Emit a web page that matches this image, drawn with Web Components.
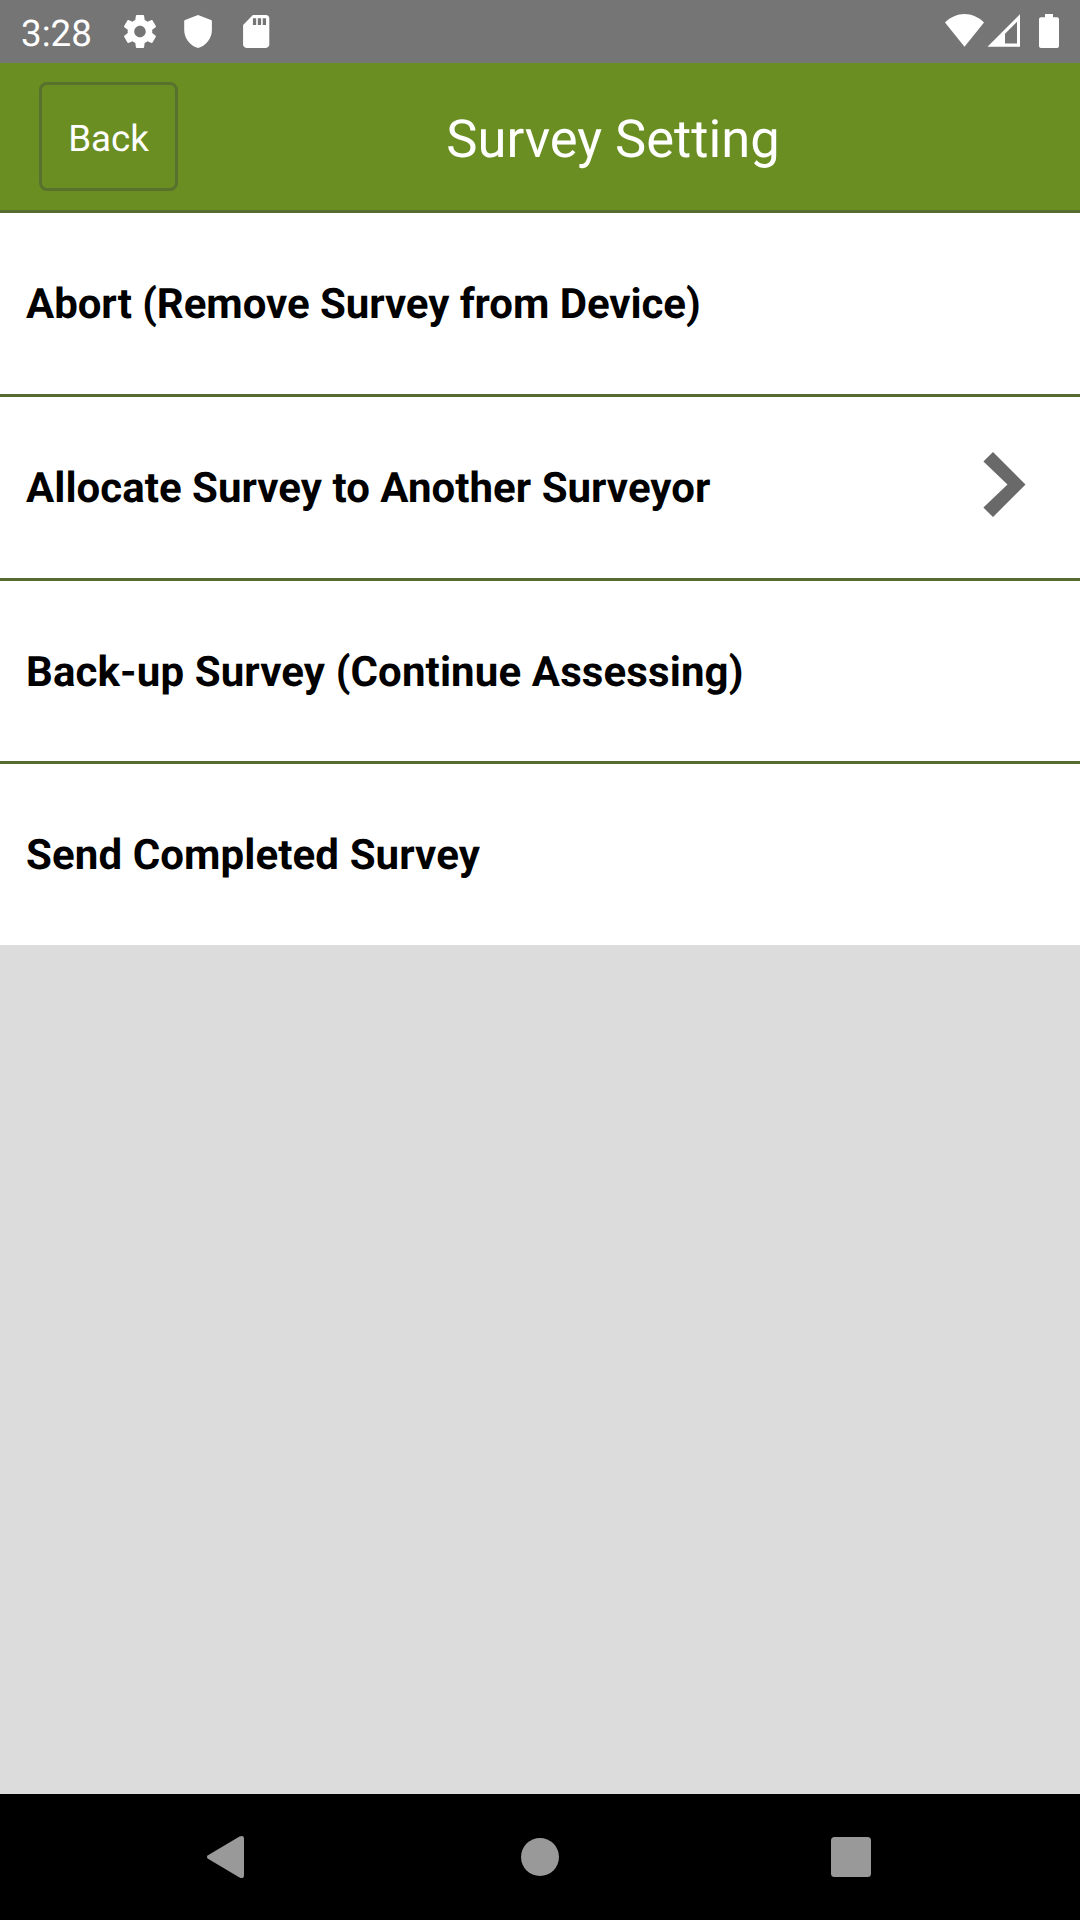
<!DOCTYPE html>
<html lang="en">
<head>
<meta charset="utf-8">
<title>Survey Setting</title>
<style>
    body {
        margin: 0;
        font-family: Roboto, "Liberation Sans", sans-serif;
        text-rendering: geometricPrecision;
    }
</style>
</head>
<body>
<survey-screen>
    <status-bar slot="status" time="3:28"></status-bar>
    <title-bar slot="title" back="Back">Survey Setting</title-bar>
    <setting-row style="--tracking: -0.06px">Abort (Remove Survey from Device)</setting-row>
    <setting-row style="--tracking: 0.03px" chevron>Allocate Survey to Another Surveyor</setting-row>
    <setting-row style="--tracking: 0.12px">Back-up Survey (Continue Assessing)</setting-row>
    <setting-row style="--tracking: 0.1px" last>Send Completed Survey</setting-row>
    <nav-bar slot="nav"></nav-bar>
</survey-screen>

<script>
class SurveyScreen extends HTMLElement {
    constructor() {
        super()
        this.attachShadow({ mode: 'open' })
        this.shadowRoot.innerHTML = /*html*/`
        <style>
            :host {
                display: flex;
                flex-direction: column;
                width: 1080px;
                height: 1920px;
                background-color: #dcdcdc;
                overflow: hidden;
            }
            main {
                flex: 1;
            }
        </style>
        <slot name="status"></slot>
        <slot name="title"></slot>
        <main><slot></slot></main>
        <slot name="nav"></slot>
        `
    }
}

class StatusBar extends HTMLElement {
    constructor() {
        super()
        this.attachShadow({ mode: 'open' })
        this.shadowRoot.innerHTML = /*html*/`
        <style>
            :host {
                display: flex;
                justify-content: space-between;
                height: 63px;
                background-color: #757575;
                color: white;
            }
            div {
                display: flex;
            }
            span {
                width: 94px;
                padding-left: 21px;
                font-size: 36.75px;
                line-height: 68px;
            }
            svg {
                display: block;
                fill: white;
            }
        </style>
        <div>
            <span></span>
            <svg width="165" height="63" viewBox="115 0 165 63">
                <path transform="translate(120.3 11.8) scale(1.64)" d="M19.43 12.98c.04-.32.07-.64.07-.98s-.03-.66-.07-.98l2.11-1.65c.19-.15.24-.42.12-.64l-2-3.46c-.12-.22-.39-.3-.61-.22l-2.49 1c-.52-.4-1.08-.73-1.69-.98l-.38-2.65C14.46 2.18 14.25 2 14 2h-4c-.25 0-.46.18-.49.42l-.38 2.65c-.61.25-1.17.59-1.69.98l-2.49-1c-.23-.09-.49 0-.61.22l-2 3.46c-.13.22-.07.49.12.64l2.11 1.65c-.04.32-.07.65-.07.98s.03.66.07.98l-2.11 1.65c-.19.15-.24.42-.12.64l2 3.46c.12.22.39.3.61.22l2.49-1c.52.4 1.08.73 1.69.98l.38 2.65c.03.24.24.42.49.42h4c.25 0 .46-.18.49-.42l.38-2.65c.61-.25 1.17-.59 1.69-.98l2.49 1c.23.09.49 0 .61-.22l2-3.46c.12-.22.07-.49-.12-.64l-2.11-1.65zM12 15.5c-1.93 0-3.5-1.57-3.5-3.5s1.57-3.5 3.5-3.5 3.5 1.57 3.5 3.5-1.57 3.5-3.5 3.5z"/>
                <path d="M198 15 L211 20 Q211.900 20.400 211.900 21.500 V30 C211.900 38.500 206 45.800 198 48 C190 45.800 184.200 38.500 184.200 30 V21.500 Q184.200 20.400 185 20 Z"/>
                <path transform="translate(236.500 11.8) scale(1.64)" d="M18 2h-8L4.020 8 4 20c0 1.100.9 2 2 2h12c1.100 0 2-.9 2-2V4c0-1.100-.9-2-2-2zm-6 6h-2V4h2v4zm3 0h-2V4h2v4zm3 0h-2V4h2v4z"/>
            </svg>
        </div>
        <svg width="150" height="63" viewBox="930 0 150 63">
            <path d="M964.500 46.700 L945 22.500 C950.500 17 957.300 14 964.500 14 C971.700 14 978.500 17 984 22.500 Z"/>
            <path fill-rule="evenodd" d="M1020 14.300 V46.700 H987.500 Z M1017 21.800 L1005 33.800 V43.600 H1017 Z"/>
            <path d="M1045 14 H1053 V17.300 H1057 Q1059 17.300 1059 19.300 V46 Q1059 48 1057 48 H1041 Q1039 48 1039 46 V19.300 Q1039 17.300 1041 17.300 H1045 Z"/>
        </svg>
        `
    }

    connectedCallback() {
        this.shadowRoot.querySelector('span').textContent = this.getAttribute('time')
    }
}

class TitleBar extends HTMLElement {
    constructor() {
        super()
        this.attachShadow({ mode: 'open' })
        this.shadowRoot.innerHTML = /*html*/`
        <style>
            :host {
                display: flex;
                align-items: center;
                box-sizing: border-box;
                height: 150px;
                padding-left: 39px;
                border-bottom: 3px solid #556b2f;
                background-color: #6b8e23;
                color: white;
            }
            button {
                box-sizing: border-box;
                width: 139px;
                height: 109px;
                padding: 3px 0 0;
                border: 3px solid #58722d;
                border-radius: 8px;
                background: none;
                color: inherit;
                font: inherit;
                font-size: 36.75px;
                text-rendering: inherit;
            }
            h1 {
                flex: 1;
                margin: 0;
                padding: 5px 32px 0 0;
                font-size: 52.5px;
                font-weight: 400;
                text-align: center;
            }
        </style>
        <button></button>
        <h1><slot></slot></h1>
        `
    }

    connectedCallback() {
        this.shadowRoot.querySelector('button').textContent = this.getAttribute('back')
    }
}

class SettingRow extends HTMLElement {
    constructor() {
        super()
        this.attachShadow({ mode: 'open' })
        this.shadowRoot.innerHTML = /*html*/`
        <style>
            :host {
                display: flex;
                align-items: center;
                justify-content: space-between;
                box-sizing: border-box;
                height: 184px;
                padding: 0 54px 0 26px;
                border-bottom: 3px solid #556b2f;
                background-color: white;
                color: black;
                font-size: 42px;
                font-weight: 700;
                letter-spacing: var(--tracking, 0);
            }
            :host(:nth-of-type(3)) {
                height: 183px;
            }
            :host([last]) {
                height: 181px;
                border-bottom: none;
            }
            span {
                padding-top: 2px;
            }
            svg {
                display: none;
                fill: #696969;
            }
            :host([chevron]) svg {
                display: block;
            }
        </style>
        <span><slot></slot></span>
        <svg width="43" height="74" viewBox="0 0 43 74">
            <path d="M10 1 L42.500 33.500 L10 66 L.4 56.600 L24.500 33.500 L.4 10.400 Z"/>
        </svg>
        `
    }
}

class NavBar extends HTMLElement {
    constructor() {
        super()
        this.attachShadow({ mode: 'open' })
        this.shadowRoot.innerHTML = /*html*/`
        <style>
            :host {
                display: block;
                height: 126px;
                background-color: black;
            }
            svg {
                display: block;
                fill: #999;
            }
        </style>
        <svg width="1080" height="126" viewBox="0 0 1080 126">
            <path d="M208 61.200 L239.500 42.500 Q244 40.500 244 45 V81 Q244 85.500 239.500 83.500 L208 64.800 Q205.800 63 208 61.200 Z"/>
            <circle cx="540" cy="63" r="19"/>
            <rect x="831" y="43" width="40" height="40" rx="3.500"/>
        </svg>
        `
    }
}

customElements.define('survey-screen', SurveyScreen)
customElements.define('status-bar', StatusBar)
customElements.define('title-bar', TitleBar)
customElements.define('setting-row', SettingRow)
customElements.define('nav-bar', NavBar)
</script>
</body>
</html>
